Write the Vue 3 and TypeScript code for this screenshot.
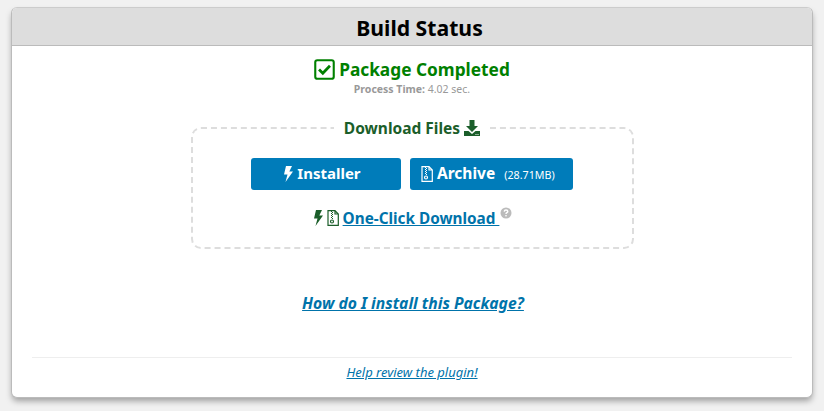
<template>
  <div class="page">
    <div class="card">
      <h2 class="card-title">Build Status</h2>
      <div class="card-body">
        <div class="status">
          <svg class="status-icon" viewBox="0 0 20 20" fill="none" stroke="currentColor">
            <rect x="1.200" y="1.200" width="17.600" height="17.600" rx="2" stroke-width="2" />
            <path d="M4.800 10l3.600 3.600L15.200 6.400" stroke-width="2.600" />
          </svg>
          <span>Package Completed</span>
        </div>
        <div class="process-time"><b>Process Time:</b> 4.02 sec.</div>

        <fieldset class="downloads">
          <legend>
            Download Files
            <svg class="legend-icon" viewBox="0 0 16 16" fill="currentColor">
              <path d="M5.500 0h5v6H14L8 12 2 6h3.500z" />
              <path d="M0 11h4.500L8 14l3.500-3H16v5H0z" />
              <rect x="11.500" y="14" width="1" height="1" fill="#fff" />
              <rect x="13.500" y="14" width="1" height="1" fill="#fff" />
            </svg>
          </legend>
          <div class="buttons">
            <a class="btn btn-installer">
              <svg class="bolt" viewBox="0 0 10 16" fill="currentColor"><path :d="boltPath" /></svg>
              Installer
            </a>
            <a class="btn btn-archive">
              <svg class="zip" viewBox="0 0 12 16" fill="none" stroke="currentColor"><path :d="zipOutline" stroke-width="1.200" /><path :d="zipTeeth" /><circle cx="5" cy="11.500" r="1.500" stroke-width="1.200" /></svg>
              Archive
              <small>(28.71MB)</small>
            </a>
          </div>
          <div class="one-click">
            <svg class="bolt" viewBox="0 0 10 16" fill="currentColor"><path :d="boltPath" /></svg>
            <svg class="zip" viewBox="0 0 12 16" fill="none" stroke="currentColor"><path :d="zipOutline" stroke-width="1.200" /><path :d="zipTeeth" /><circle cx="5" cy="11.500" r="1.500" stroke-width="1.200" /></svg>
            <a class="one-click-link">One-Click Download&nbsp;</a>
            <svg class="help" viewBox="0 0 12 12">
              <circle cx="6" cy="6" r="5.500" fill="#bbb" />
              <path d="M4.200 4.600C4.300 3.500 5 3 6 3s1.800.6 1.800 1.500C7.800 5.800 6 5.600 6 7" fill="none" stroke="#fff" stroke-width="1.400" />
              <rect x="5.300" y="8" width="1.400" height="1.400" fill="#fff" />
            </svg>
          </div>
        </fieldset>

        <a class="how-to">How do I install this Package?</a>

        <div class="review">
          <a>Help review the plugin!</a>
        </div>
      </div>
    </div>
  </div>
</template>

<script setup lang="ts">
// icon shapes used more than once
const boltPath = 'M3 0h6L6.300 5.500H10L2.500 16l2-7.500H1z'
const zipOutline = 'M1 .7h7l3.300 3.300v11.300H1zM8 .7V4h3.300'
const zipTeeth = 'M4 1.500h1M5 2.500h1M4 3.500h1M5 4.500h1M4 5.500h1M5 6.500h1M4 7.500h1M5 8.500h1'
</script>

<style>
html,
body {
  margin: 0;
  background: #f1f1f1;
}
</style>

<style scoped>
.page {
  box-sizing: border-box;
  height: 411px;
  padding: 7px 11px 0;
  overflow: hidden;
  font-family: "Noto Sans", "Open Sans", sans-serif;
}

.card {
  box-sizing: border-box;
  height: 391px;
  background: #fff;
  border: 1px solid #bbb;
  border-top-color: #ccc;
  border-radius: 6px;
  box-shadow: 0 4px 6px -1px rgba(0, 0, 0, 0.35);
}

.card-title {
  box-sizing: border-box;
  height: 38px;
  margin: 0;
  padding-left: 15px;
  background: #ddd;
  border-bottom: 1px solid #bbb;
  border-radius: 5px 5px 0 0;
  color: #000;
  font-size: 21.200px;
  font-weight: 700;
  line-height: 39px;
  text-align: center;
}

.card-body {
  padding: 11px 20px 0;
  text-align: center;
}

.status {
  display: flex;
  justify-content: center;
  align-items: center;
  gap: 4px;
  height: 24px;
  color: #008000;
  font-size: 17.300px;
  font-weight: 700;
}

.status-icon {
  width: 21px;
  height: 21px;
}

.process-time {
  margin-top: 1px;
  color: #999;
  font-size: 10.500px;
  line-height: 14px;
}

.downloads {
  box-sizing: border-box;
  width: 443px;
  height: 131px;
  margin: 22px auto 0;
  padding: 0;
  border: 2px dashed #ddd;
  border-radius: 10px;
}

.downloads legend {
  padding: 0 10px;
  color: #1b5e2a;
  font-size: 15.500px;
  font-weight: 700;
  line-height: 20px;
}

.legend-icon {
  width: 16px;
  height: 16px;
  vertical-align: -2px;
}

.buttons {
  display: flex;
  justify-content: center;
  gap: 9px;
  margin-top: 20px;
}

.btn {
  box-sizing: border-box;
  height: 32px;
  border-radius: 3px;
  background: #007cba;
  color: #fff;
  font-size: 15px;
  font-weight: 700;
  line-height: 30px;
  white-space: nowrap;
}

.btn-installer {
  width: 150px;
  padding-right: 8px;
}

.btn-archive {
  width: 163px;
  padding-left: 11px;
  font-size: 15.500px;
  text-align: left;
}

.btn small {
  margin-left: 5px;
  font-size: 10.700px;
  font-weight: 400;
}

.bolt {
  width: 10px;
  height: 16px;
  vertical-align: -3px;
}

.zip {
  width: 12px;
  height: 16px;
  vertical-align: -3px;
}

.one-click {
  display: flex;
  justify-content: center;
  align-items: center;
  gap: 4px;
  margin-top: 18px;
  margin-left: 1px;
  color: #1b5e2a;
}

.one-click-link {
  color: #0073aa;
  font-size: 15.300px;
  font-weight: 700;
  line-height: 20px;
  text-decoration: underline;
}

.help {
  align-self: flex-start;
  width: 12px;
  height: 12px;
  margin-left: -3px;
  margin-top: -1px;
}

.how-to {
  display: block;
  margin-top: 44px;
  padding-left: 2px;
  color: #0073aa;
  font-size: 15.700px;
  font-style: italic;
  font-weight: 700;
  line-height: 21px;
  text-decoration: underline;
}

.review {
  margin-top: 43px;
  padding-top: 6px;
  border-top: 1px solid #eee;
  color: #0073aa;
  font-size: 13px;
  font-style: italic;
  line-height: 17px;
  text-decoration: underline;
}
</style>
